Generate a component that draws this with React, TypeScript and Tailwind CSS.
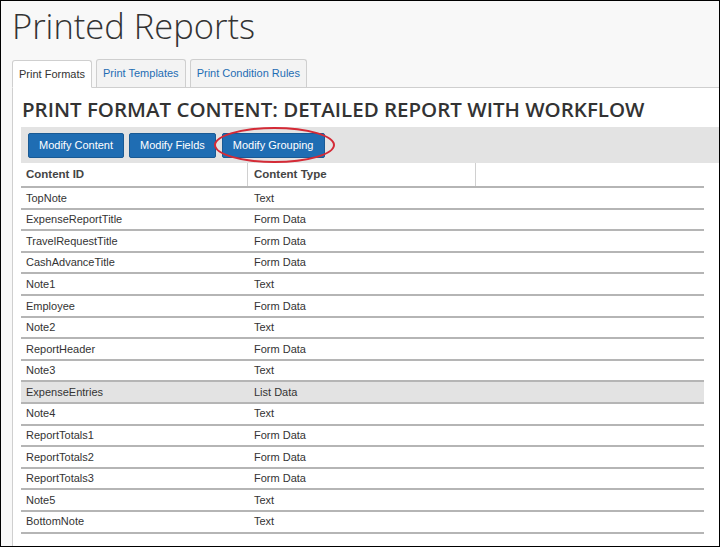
const ROWS: [string, string][] = [
  ['TopNote', 'Text'],
  ['ExpenseReportTitle', 'Form Data'],
  ['TravelRequestTitle', 'Form Data'],
  ['CashAdvanceTitle', 'Form Data'],
  ['Note1', 'Text'],
  ['Employee', 'Form Data'],
  ['Note2', 'Text'],
  ['ReportHeader', 'Form Data'],
  ['Note3', 'Text'],
  ['ExpenseEntries', 'List Data'],
  ['Note4', 'Text'],
  ['ReportTotals1', 'Form Data'],
  ['ReportTotals2', 'Form Data'],
  ['ReportTotals3', 'Form Data'],
  ['Note5', 'Text'],
  ['BottomNote', 'Text'],
];

const SELECTED = 'ExpenseEntries';

function Tab({ label, active }: { label: string; active?: boolean }) {
  return (
    <div
      className={
        'h-[28px] px-[6px] flex items-center border border-[#cfcfcf] rounded-t-[3px] text-[11px] ' +
        (active
          ? 'bg-white border-b-white text-[#333] -mb-px relative'
          : 'bg-[#f3f3f3] text-[#1f6db3] border-b-0')
      }
    >
      {label}
    </div>
  );
}

function ActionButton({ label }: { label: string }) {
  return (
    <button className="h-[25px] px-[10px] bg-[#1f6db3] border border-[#195a94] rounded-[2px] text-white text-[11px] leading-none">
      {label}
    </button>
  );
}

export default function App() {
  return (
    <div
      className="w-[720px] h-[547px] overflow-hidden border border-black bg-[#f8f8f8] flex flex-col"
      style={{ fontFamily: '"Liberation Sans", Arial, sans-serif' }}
    >
      <h1
        className="pl-[11px] pt-[1px] h-[58px] text-[34.5px] font-light text-[#333] leading-[48px]"
        style={{ fontFamily: '"Open Sans", sans-serif' }}
      >
        Printed Reports
      </h1>

      <div className="pl-[11px] flex items-end gap-[4px]">
        <Tab label="Print Formats" active />
        <Tab label="Print Templates" />
        <Tab label="Print Condition Rules" />
      </div>

      <div className="flex-1 ml-[11px] bg-white border-l border-t border-[#cfcfcf] pl-[8px] flex flex-col">
        <h2
          className="pl-[1px] pt-[6px] h-[39px] text-[20.5px] font-semibold text-[#333] leading-[30px] whitespace-nowrap"
          style={{ fontFamily: '"Open Sans", sans-serif' }}
        >
          PRINT FORMAT CONTENT: DETAILED REPORT WITH WORKFLOW
        </h2>

        <div className="h-[36px] bg-[#e3e3e3] border-r border-[#d0d0d0] flex items-center gap-[5px] pl-[7px] -mr-px">
          <ActionButton label="Modify Content" />
          <ActionButton label="Modify Fields" />
          <div className="relative ml-[1px]">
            <ActionButton label="Modify Grouping" />
            <div className="absolute -left-[8px] -right-[10px] -top-[5px] -bottom-[5px] rounded-[50%] border-2 border-[#d42a36] pointer-events-none" />
          </div>
        </div>

        <div className="w-[683px] text-[11px] text-[#333]">
          <div className="h-[25px] grid grid-cols-[227px_228px_228px] border-b-2 border-[#b5b5b5] text-[11.5px] font-bold text-[#444]">
            <div className="pl-[5px] flex items-center border-r border-[#d0d0d0]">Content ID</div>
            <div className="pl-[6px] flex items-center border-r border-[#d0d0d0]">Content Type</div>
            <div />
          </div>
          {ROWS.map(([id, type]) => (
            <div
              key={id}
              className={
                'h-[21.6px] grid grid-cols-[227px_228px_228px] items-center border-b-2 border-[#b5b5b5] ' +
                (id === SELECTED ? 'bg-[#e3e3e3]' : '')
              }
            >
              <div className="pl-[5px]">{id}</div>
              <div className="pl-[6px]">{type}</div>
              <div />
            </div>
          ))}
        </div>
      </div>
    </div>
  );
}
